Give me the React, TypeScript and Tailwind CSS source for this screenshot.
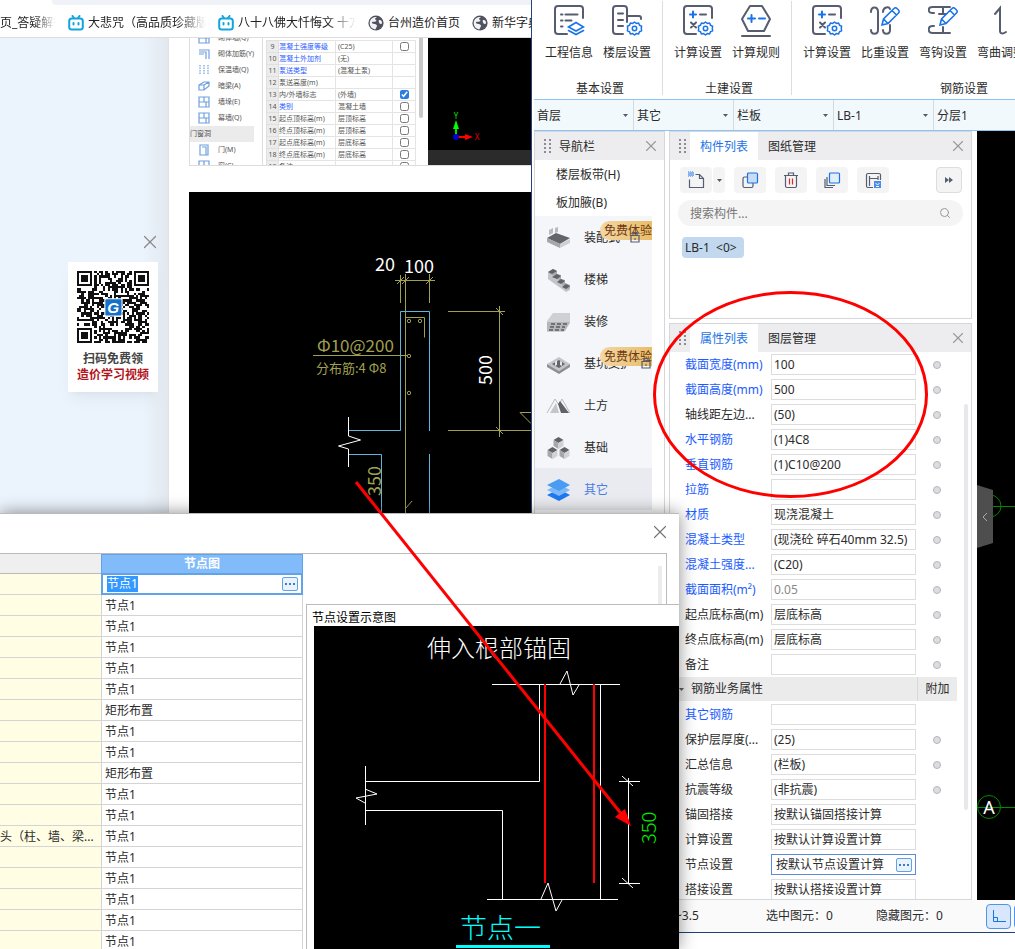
import type { ReactNode } from "react";
import clsx from "clsx";
import { Search, X } from "lucide-react";

const INK = "#575d70";
const BLUE = "#1a73e8";
const OLIVE = "#a0a050";
const CAD_BLUE = "#5fb4dc";

/* ---------- browser ---------- */

const bookmarks = [
  { title: "大悲咒（高品质珍藏版", icon: "tv", faded: true },
  { title: "八十八佛大忏悔文 十方", icon: "tv", faded: true },
  { title: "台州造价首页", icon: "globe", faded: false },
  { title: "新华字典", icon: "globe", faded: false },
];

const shotNav = [
  "砌体墙(Q)",
  "砌体加筋(Y)",
  "保温墙(Q)",
  "暗梁(A)",
  "墙垛(E)",
  "幕墙(Q)",
  "门窗洞",
  "门(M)",
  "窗(C)",
];

const shotRows = [
  { no: 9, name: "混凝土强度等级", value: "(C25)", blue: true, check: "off" },
  { no: 10, name: "混凝土外加剂", value: "(无)", blue: true, check: "" },
  { no: 11, name: "泵送类型", value: "(混凝土泵)", blue: true, check: "" },
  { no: 12, name: "泵送高度(m)", value: "", blue: false, check: "" },
  { no: 13, name: "内/外墙标志", value: "(外墙)", blue: false, check: "on" },
  { no: 14, name: "类别", value: "混凝土墙", blue: true, check: "off" },
  { no: 15, name: "起点顶标高(m)", value: "层顶标高", blue: false, check: "off" },
  { no: 16, name: "终点顶标高(m)", value: "层顶标高", blue: false, check: "off" },
  { no: 17, name: "起点底标高(m)", value: "层底标高", blue: false, check: "off" },
  { no: 18, name: "终点底标高(m)", value: "层底标高", blue: false, check: "off" },
  { no: 19, name: "备注", value: "", blue: false, check: "off" },
];

function TvIcon() {
  return (
    <svg viewBox="0 0 16 16" className="size-4 shrink-0" fill="none" stroke="#12a5dc" strokeWidth="2" strokeLinecap="round">
      <path d="M4.500 1 6 3M11.500 1 10 3" />
      <rect x="1.200" y="3.600" width="13.600" height="10.800" rx="2.500" />
      <path d="M5.500 8v1.600M10.500 8v1.600" />
    </svg>
  );
}

function GlobeIcon() {
  return (
    <svg viewBox="0 0 16 16" className="size-4 shrink-0">
      <circle cx="8" cy="8" r="7.600" fill="#50535f" />
      <path d="M9 2c-1 .8-2 1-2 2 0 .8 1.400.6 1.400 1.500S6.600 7 5 6.800C3.800 6.600 3.400 8 4.600 8.600c1 .5 2.400.2 3.400.9s1.400 1.600.6 2.600c-.6.8-.8 1.300-.9 2.200C4.200 14.200 1.700 11.400 1.700 8c0-3.600 3-6.400 7.300-6z" fill="#f2f3f5" />
      <path d="M11 5c1.200-.2 2.400.3 3 2l-.4 2c-1.400.4-3.600-1.400-2.600-4z" fill="#f2f3f5" />
    </svg>
  );
}

const QR = 33;

function inFinder(x: number, y: number) {
  const corners = [
    [0, 0],
    [QR - 7, 0],
    [0, QR - 7],
  ];
  for (const [cx, cy] of corners) {
    const dx = x - cx;
    const dy = y - cy;
    if (dx >= -1 && dx <= 7 && dy >= -1 && dy <= 7) {
      const ring = Math.max(Math.abs(dx - 3), Math.abs(dy - 3));
      return ring === 3 || ring <= 1 ? 1 : 0;
    }
  }
  return -1;
}

function QrCode() {
  let seed = 7341;
  let d = "";
  for (let y = 0; y < QR; y++) {
    for (let x = 0; x < QR; x++) {
      seed = (seed * 16807) % 2147483647;
      const finder = inFinder(x, y);
      const on = finder === -1 ? (seed >> 8) % 100 < 54 : finder === 1;
      if (on) d += `M${x} ${y}h1v1h-1z`;
    }
  }
  return (
    <svg viewBox={`0 0 ${QR} ${QR}`} className="size-[72px]">
      <path d={d} fill="#111" shapeRendering="crispEdges" />
      <rect x="12.500" y="12.500" width="8.400" height="8.400" rx="0.600" fill="#fff" />
      <rect x="13" y="13" width="7.400" height="7.400" rx="0.500" fill="#1570c8" />
      <text x="16.600" y="19.200" fontSize="7" fontWeight="900" fontStyle="italic" fill="#fff" textAnchor="middle" fontFamily="Liberation Sans">
        G
      </text>
    </svg>
  );
}

function ShotIcon({ kind }: { kind: number }) {
  return (
    <svg viewBox="0 0 12 12" className="size-3" fill="none" stroke="#6f9fe0" strokeWidth="1.200">
      {kind === 1 && <path d="M1 2h10v9M1 4h7v7M1 6h5" />}
      {kind === 2 && <path d="M2 1v10M6 1v10M10 1v10" strokeDasharray="1.500 1" />}
      {kind === 3 && <path d="M1 5l5-3h5v4l-5 4H1zM1 5h5l5-3M6 5v5" />}
      {kind === 7 && <path d="M2 1h8v10H2zM4 3h4v8" />}
      {kind !== 1 && kind !== 2 && kind !== 3 && kind !== 7 && <path d="M1 1h10v10H1zM1 6h10M6 1v5M8 6v5" />}
    </svg>
  );
}

function SoftwareShot() {
  return (
    <div className="flex h-[128px] shrink-0 overflow-hidden border-b border-[#ddd] text-[7px] text-[#555]">
      <ul className="-mt-2 w-[74px] shrink-0 border-x border-[#ddd]">
        {shotNav.map((name, i) => (
          <li key={name} className={clsx("flex h-4 items-center gap-2", name === "门窗洞" ? "mr-2 bg-[#ebebeb] pl-0" : "pl-2")}>
            {name !== "门窗洞" && <ShotIcon kind={i} />}
            {name}
          </li>
        ))}
      </ul>
      <div className="ml-[3px] w-[150px] shrink-0">
        <table className="mt-[2px] w-full table-fixed border-collapse">
          <tbody>
            {shotRows.map((row) => (
              <tr key={row.no} className="h-3 leading-[10px]">
                <td className="w-3 border border-[#e0e0e0] bg-[#ececec] text-center">{row.no}</td>
                <td className={clsx("w-[57px] border border-[#e4e4e4] whitespace-nowrap", row.blue && "text-[#2a5cff]")}>{row.name}</td>
                <td className="w-[57px] border border-[#e4e4e4] pl-0.5 whitespace-nowrap">{row.value}</td>
                <td className="border border-[#e4e4e4]">
                  {row.check && (
                    <input
                      type="checkbox"
                      aria-label={row.name}
                      defaultChecked={row.check === "on"}
                      className="mx-auto block size-[9px] accent-[#2a7de1]"
                    />
                  )}
                </td>
              </tr>
            ))}
          </tbody>
        </table>
      </div>
      <div className="w-3 shrink-0 px-[3px]">
        <div className="h-20 w-1 rounded-b bg-[#c8c8c8]" />
      </div>
      <svg viewBox="428 38 103 128" className="h-full min-w-0 flex-1 bg-black" preserveAspectRatio="xMinYMin slice">
        <rect x="428" y="150" width="103" height="16" fill="#2b2b2b" />
        <path d="M456 137V126" stroke="#00e000" strokeWidth="2" />
        <path d="M453 129l3-9 3 9z" fill="#00ff00" />
        <path d="M456 137h11" stroke="#f00" strokeWidth="2" />
        <path d="M465 134l8 3-8 3z" fill="#f00" />
        <circle cx="456" cy="137" r="3" fill="#0000d0" />
        <text x="456" y="119" fill="#00e000" fontSize="8" textAnchor="middle">Y</text>
        <text x="477" y="140" fill="#e00000" fontSize="8" textAnchor="middle">X</text>
      </svg>
    </div>
  );
}

function SectionDrawing() {
  return (
    <svg viewBox="189 192 342 400" className="mt-[26px] h-[400px] w-full shrink-0 bg-black" preserveAspectRatio="xMinYMin slice" fill="none" fontFamily="Liberation Sans Narrow, Noto Sans CJK SC, sans-serif">
      <g stroke={OLIVE}>
        <path d="M395 280.500h40M400.500 275v28M405.500 274v318M429.500 274v29" />
        <path d="M397 284l7-7M402 284l7-7M426 284l7-7" />
        <path d="M405 317.500h19.500v20M313 355.500h94M448 311.500h57M448 430.500h83M499.500 306v131" />
        <path d="M496 308l7 7M496 427l7 7M531 412.500h-11l11 11M406 508l6-7" />
        <circle cx="409" cy="321" r="1.700" />
        <circle cx="420" cy="321" r="1.700" />
        <circle cx="409" cy="356" r="1.700" />
        <circle cx="409" cy="393" r="1.700" />
      </g>
      <g stroke={CAD_BLUE}>
        <path d="M348 430.500h52.500v-119h29V431M348 454.500h33.500V592M429.500 454v138" />
      </g>
      <path d="M348.500 417v19l12 4-22 6 10 3v18" stroke="#fff" />
      <g fill="#fff" fontSize="18">
        <text x="375" y="271">20</text>
        <text x="404" y="273">100</text>
        <text transform="translate(492 385) rotate(-90)">500</text>
      </g>
      <g fill={OLIVE}>
        <text x="317" y="352" fontSize="17">Φ10@200</text>
        <text x="316" y="373" fontSize="13">分布筋:4 Φ8</text>
        <text transform="translate(381 496) rotate(-90)" fontSize="18">350</text>
      </g>
    </svg>
  );
}

function Browser() {
  return (
    <div className="flex w-[531px] shrink-0 flex-col overflow-hidden bg-white">
      <div className="ml-[52px] h-[5px] shrink-0 rounded-bl bg-[#eff3f7]" />
      <nav className="flex h-[33px] shrink-0 items-center gap-3 border-b border-[#ddd] pt-1 text-xs whitespace-nowrap text-[#222]">
        <a href="#faq" className="w-14 shrink-0 overflow-hidden [mask-image:linear-gradient(to_right,black_60%,transparent)]">
          页_答疑解答
        </a>
        {bookmarks.map((mark) => (
          <a key={mark.title} href="#bookmark" className="flex shrink-0 items-center gap-1">
            {mark.icon === "tv" ? <TvIcon /> : <GlobeIcon />}
            <span className={clsx(mark.faded && "w-[118px] overflow-hidden [mask-image:linear-gradient(to_right,black_75%,transparent)]")}>
              {mark.title}
            </span>
          </a>
        ))}
      </nav>
      <div className="flex min-h-0 flex-1">
        <aside className="flex w-[169px] shrink-0 flex-col items-end border-r border-[#dfe3e8] bg-linear-to-r from-[#ebf3fc] from-85% to-[#e2e8ef] pt-[193px] pr-[7px]">
          <button type="button" aria-label="关闭" className="text-[#888]">
            <X size={22} strokeWidth={1.3} />
          </button>
          <div className="mt-[9px] mr-[3px] flex h-[130px] w-[90px] flex-col items-center bg-white pt-[9px] text-xs font-bold shadow-lg shadow-black/5">
            <QrCode />
            <p className="mt-2 leading-4 text-[#444]">扫码免费领</p>
            <p className="leading-4 text-[#b3141c]">造价学习视频</p>
          </div>
        </aside>
        <main className="flex min-w-0 flex-1 flex-col pl-5">
          <SoftwareShot />
          <SectionDrawing />
        </main>
      </div>
    </div>
  );
}

/* ---------- ribbon ---------- */

function Gear() {
  return (
    <g stroke={BLUE} strokeWidth="1.500" fill="#fff">
      <path d="M22.500 17l1.800 1.400 2.300-.3.900 2.200 2.100.9-.3 2.300 .3 2.300-2.100.9-.9 2.200-2.300-.3-1.800 1.400-1.800-1.400-2.300.3-.9-2.200-2.100-.9.300-2.300-.3-2.300 2.100-.9.900-2.200 2.300.3z" strokeLinejoin="round" />
      <circle cx="22.500" cy="23.500" r="2.200" />
    </g>
  );
}

function CalcGlyph() {
  return (
    <>
      <path d="M29 13V4a3 3 0 0 0-3-3H4a3 3 0 0 0-3 3v22a3 3 0 0 0 3 3h9" />
      <path d="M17 9.500h6M8 17.500l5 5M13 17.500l-5 5" />
      <path d="M7 9.500h6M10 6.500v6" stroke={BLUE} />
      <Gear />
    </>
  );
}

function Pencil() {
  return (
    <path
      d="M12 20l1.500-6L24 3.500a2 2 0 0 1 3 0L28.500 5a2 2 0 0 1 0 3L18 18.500zM22 5.500l4.500 4.500M13.500 14l4.500 4.500"
      stroke={BLUE}
      fill="#fff"
      strokeWidth="1.600"
    />
  );
}

const ribbonIcons: Record<string, ReactNode> = {
  project: (
    <>
      <path d="M29 13V4a3 3 0 0 0-3-3H4a3 3 0 0 0-3 3v22a3 3 0 0 0 3 3h9" />
      <path d="M7 9.500h1.500M11.500 9.500h12M7 15.500h1.500M11.500 15.500h6M7 21.500h1.500" />
      <path d="M14.500 22l7.500-4.500 7.500 4.500-7.500 4zM14.500 25.500l7.500 4 7.500-4" stroke={BLUE} strokeWidth="1.600" />
    </>
  ),
  floor: (
    <>
      <path d="M11 29H4a3 3 0 0 1-3-3V4a3 3 0 0 1 3-3h8a3 3 0 0 1 3 3v13M15 11h12a2 2 0 0 1 2 2v1" />
      <path d="M6 8.500h5M6 15h5M6 21h5" />
      <Gear />
    </>
  ),
  calc: <CalcGlyph />,
  rule: (
    <>
      <path d="M9 1h12l8 13-6 12H7L1 14z" strokeLinejoin="round" />
      <path d="M1 31h28" />
      <path d="M7 13.500h7M10.500 10v7M18 13.500h6" stroke={BLUE} />
    </>
  ),
  weight: (
    <>
      <path d="M1 7c0-6 7-6 7 0v18c0 5-7 5-7 0M13 7c0-5 6-6 7-3M13 25c0 5 7 5 7 0v-5" />
      <Pencil />
    </>
  ),
  hook: (
    <>
      <path d="M22 2H4.500c-5 0-5 6 0 6H6M15 2v6M11 9h8M22 28H4.500c-5 0-5-7 0-7H6M15 22v6" />
      <Pencil />
    </>
  ),
  bend: <path d="M9 9l5-6v23c0 3 3 3 6 1" />,
};

const ribbonGroups = [
  {
    title: "基本设置",
    items: [
      { label: "工程信息", icon: "project" },
      { label: "楼层设置", icon: "floor" },
    ],
  },
  {
    title: "土建设置",
    items: [
      { label: "计算设置", icon: "calc" },
      { label: "计算规则", icon: "rule" },
    ],
  },
  {
    title: "钢筋设置",
    items: [
      { label: "计算设置", icon: "calc" },
      { label: "比重设置", icon: "weight" },
      { label: "弯钩设置", icon: "hook" },
      { label: "弯曲调整", icon: "bend" },
    ],
  },
];

function Ribbon() {
  return (
    <div className="flex h-[99px] shrink-0 overflow-hidden pt-px">
      {ribbonGroups.map((group, i) => (
        <section key={group.title} className={clsx("h-[94px] shrink-0 px-[6px] pt-1", i < 2 ? "w-[129px] border-r border-[#ddd]" : "w-[340px]")}>
          <div className="flex">
            {group.items.map((item) => (
              <button key={item.label} type="button" className="flex w-[58px] shrink-0 flex-col items-center whitespace-nowrap">
                <svg viewBox="0 0 31 32" className="h-8 w-[31px]" fill="none" stroke={INK} strokeWidth="2" strokeLinecap="round">
                  {ribbonIcons[item.icon]}
                </svg>
                <span className="mt-2 leading-4">{item.label}</span>
              </button>
            ))}
          </div>
          <p className="mt-5 pl-1 text-center leading-4">{group.title}</p>
        </section>
      ))}
    </div>
  );
}

const pickers = [
  { label: "楼层", value: "首层" },
  { label: "类别", value: "其它" },
  { label: "构件类型", value: "栏板" },
  { label: "构件", value: "LB-1" },
  { label: "分层", value: "分层1" },
];

function PickerBar() {
  return (
    <div className="flex h-8 shrink-0 overflow-hidden border-y border-[#90c3f5] bg-[#f2f9fd]">
      {pickers.map((picker) => (
        <label key={picker.label} className="relative flex w-[100px] shrink-0 items-center border-r border-[#d5dade]">
          <select aria-label={picker.label} className="w-full appearance-none bg-transparent pt-0.5 pl-[3px] outline-none">
            <option>{picker.value}</option>
          </select>
          <Caret className="pointer-events-none absolute right-[5px]" />
        </label>
      ))}
    </div>
  );
}

function Caret({ className }: { className?: string }) {
  return (
    <svg viewBox="0 0 5 3" className={clsx("h-[3px] w-[5px]", className)}>
      <path d="M0 0h5L2.500 3z" fill="#555a66" />
    </svg>
  );
}

/* ---------- panels ---------- */

function Grip() {
  return (
    <svg viewBox="0 0 7 14" className="h-[14px] w-[7px]" fill="#8a8c92">
      {[0, 4, 8, 12].map((y) => (
        <g key={y}>
          <rect y={y} width="2" height="2" />
          <rect x="5" y={y} width="2" height="2" />
        </g>
      ))}
    </svg>
  );
}

function CloseButton() {
  return (
    <button type="button" aria-label="关闭" className="ml-auto text-[#999]">
      <X size={18} strokeWidth={1.5} />
    </button>
  );
}

function TabHeader({ active, other }: { active: string; other: string }) {
  return (
    <header className="flex h-7 shrink-0 items-center bg-[#ededf0] pr-1 pl-[9px]">
      <Grip />
      <button type="button" className="ml-1 h-full w-[68px] bg-white pt-0.5 text-[#1a73e8]">
        {active}
      </button>
      <button type="button" className="h-full w-[68px] pt-0.5">
        {other}
      </button>
      <CloseButton />
    </header>
  );
}

const navIcons: Record<string, ReactNode> = {
  装配式: (
    <>
      <path d="M1 12l9-5 14 5-10 6z" fill="#62656b" />
      <path d="M1 12l13 6v4L1 16z" fill="#a5a7ab" />
      <path d="M14 18l10-5v4l-10 5z" fill="#cfd0d3" />
      <path d="M3 4l4-2v5l-4 2zM9 2l3-1v5l-3 1z" fill="#b9bbbf" />
    </>
  ),
  楼梯: (
    <>
      <path d="M2 4v7l18 13 4-2v-4z" fill="#c2c4c7" />
      <path d="M2 4l5-3 4 2v3l4 1v4l4 1v3l5 2v3l-4 2v-3l-4-2v-4l-5-2V9L6 7z" fill="#a8aaae" />
      <path d="M2 4l5-3 4 2-5 3zM6 9l5-3 4 2-4 3zM11 14l4-3 4 2-4 3zM16 19l4-3 4 2-4 3z" fill="#5f6268" />
    </>
  ),
  装修: (
    <>
      <path d="M1 11l6-8h17v10l-6 9H1z" fill="#cfd0d3" />
      <path d="M1 12h23l-5 9H1z" fill="#b4b6ba" />
      <path d="M5 14h4M11 14h4M17 14h4M4 17h4M10 17h4M16 17h3M3 20h4M9 20h4M15 20h3" stroke="#5a5d63" strokeWidth="1.600" />
    </>
  ),
  基坑支护: (
    <>
      <path d="M1 12l12-7 11 7-11 7z" fill="#c4c5c8" />
      <path d="M1 12v3l12 7v-3zM24 12v3l-11 7v-3z" fill="#8c8f94" />
      <path d="M6 12l7-4 6 4-6 4z" fill="#62656b" />
      <path d="M9 10l2-2v5l-2 1zM14 9l2 1v4l-2-1z" fill="#e6e6e8" />
    </>
  ),
  土方: (
    <>
      <path d="M1 19L9 5l4 6 3-6 8 14" stroke="#b9bbbf" fill="none" />
      <path d="M4 19l6-10 3 10z" fill="#c4c5c8" />
      <path d="M12 10l2-3 9 12h-8z" fill="#5f6268" />
    </>
  ),
  基础: (
    <>
      {[
        [12.5, 1],
        [6.5, 11],
        [18.5, 11],
      ].map(([x, y]) => (
        <g key={x} transform={`translate(${x} ${y})`}>
          <path d="M-5 3L0 0l5 3-5 3z" fill="#5f6268" />
          <path d="M-5 3l5 3v6l-5-3z" fill="#a5a7ab" />
          <path d="M5 3L0 6v6l5-3z" fill="#d0d1d4" />
        </g>
      ))}
    </>
  ),
  其它: (
    <>
      <path d="M1 17l12-6 11 6-11 6z" fill="#1e78f0" />
      <path d="M1 12l12-6 11 6-11 6z" fill="#7fb8f8" />
      <path d="M1 7l12-6 11 6-11 6z" fill="#4c9bf3" />
    </>
  ),
};

const navItems = ["装配式", "楼梯", "装修", "基坑支护", "土方", "基础", "其它"];

function NavPanel() {
  return (
    <section className="flex w-[131px] shrink-0 flex-col border border-[#d6d7da] bg-white">
      <header className="flex h-7 shrink-0 items-center bg-[#ededf0] pr-1 pl-[9px]">
        <Grip />
        <h2 className="ml-2 pt-0.5">导航栏</h2>
        <CloseButton />
      </header>
      <a href="#slab-strip" className="h-7 pt-0.5 pl-[21px] leading-[26px]">楼层板带(H)</a>
      <a href="#slab-haunch" className="h-7 pt-0.5 pl-[21px] leading-[26px]">板加腋(B)</a>
      <ul className="mr-3 bg-[#f5f6f9]">
        {navItems.map((name) => {
          const trial = name === "装配式" || name === "基坑支护";
          return (
            <li key={name} className={clsx("relative flex h-[42px] items-center pt-0.5 pl-[11px]", name === "其它" && "bg-[#e9ebf0] text-[#4a7de0]")}>
              <svg viewBox="0 0 25 25" className="size-[25px]">
                {navIcons[name]}
              </svg>
              <a href="#category" className="ml-[13px] whitespace-nowrap">{name}</a>
              {trial && (
                <>
                  <span className="absolute top-[5px] right-0 h-[19px] w-[52px] rounded-l-full bg-linear-to-r from-[#f3d6a3] to-[#e9bd68] pl-1 leading-[20px] whitespace-nowrap text-[#6e3a12]">
                    免费体验
                  </span>
                  <svg viewBox="0 0 10 12" className={clsx("absolute top-[15px] h-3 w-[10px]", name === "装配式" ? "right-3" : "right-px")} fill="none" stroke="#555c70" strokeWidth="1.200">
                    <path d="M1 4.500h8v6.500H1zM3 4V1.500h4V4M5 7v2" />
                  </svg>
                </>
              )}
            </li>
          );
        })}
      </ul>
    </section>
  );
}

const toolIcons: Record<string, ReactNode> = {
  new: (
    <>
      <path d="M7.500 3.500h4l4 4v9h-14v-8" />
      <path d="M11.500 3.500v4h4" />
      <path d="M0 1h6M0 3h6M0 5h6" stroke={BLUE} strokeWidth="1" strokeDasharray="1 1" />
      <path d="M1 2h5M1 4h5" stroke={BLUE} strokeWidth="1" strokeDasharray="1 1" />
    </>
  ),
  copy: (
    <>
      <rect x="1" y="6" width="10" height="10.500" rx="1.500" />
      <rect x="5.500" y="2" width="10" height="10" rx="1" fill="#c9dcf7" stroke={BLUE} />
    </>
  ),
  remove: (
    <>
      <path d="M2.500 5v10a1.500 1.500 0 0 0 1.500 1.500h8a1.500 1.500 0 0 0 1.500-1.500V5M1 4.500h14M5.500 4V2h5v2" />
      <path d="M6.500 7.500v6M9.500 7.500v6" stroke="#d92b2b" />
    </>
  ),
  layers: (
    <>
      <path d="M1 8v8.500h8M3 6v8.500h8" />
      <rect x="5.500" y="2" width="10" height="10" rx="1" fill="#e3eefb" stroke={BLUE} />
    </>
  ),
  store: (
    <>
      <path d="M8 16.500H3A1.500 1.500 0 0 1 1.500 15V4A1.500 1.500 0 0 1 3 2.500h11A1.500 1.500 0 0 1 15.500 4v5M4.500 5v10M4.500 7.500h8.500M13 5v4" />
      <rect x="9" y="10" width="7" height="7" fill="#4a8de8" stroke="none" />
      <path d="M10.500 12l2 2 2-2M11 15.500h3" stroke="#fff" strokeWidth="1" />
    </>
  ),
};

function ToolIcon({ name }: { name: string }) {
  return (
    <svg viewBox="0 0 17 18" className="h-[18px] w-[17px]" fill="none" stroke={INK} strokeWidth="1.200">
      {toolIcons[name]}
    </svg>
  );
}

const toolClass = "flex h-[26px] items-center justify-center rounded-sm bg-[#f4f4f4]";

function ComponentPanel() {
  return (
    <section className="flex h-[188px] shrink-0 flex-col border border-[#d6d7da] bg-white">
      <TabHeader active="构件列表" other="图纸管理" />
      <div className="mt-[7px] flex pr-[9px] pl-[10px]">
        <button type="button" aria-label="新建" className={clsx(toolClass, "w-8")}>
          <ToolIcon name="new" />
        </button>
        <button type="button" aria-label="新建选项" className={clsx(toolClass, "ml-px w-3")}>
          <Caret />
        </button>
        <div className="ml-[9px] flex gap-[9px]">
          {[
            { icon: "copy", label: "复制" },
            { icon: "remove", label: "删除" },
            { icon: "layers", label: "层间复制" },
            { icon: "store", label: "存档" },
          ].map((tool) => (
            <button key={tool.icon} type="button" aria-label={tool.label} className={clsx(toolClass, "w-8")}>
              <ToolIcon name={tool.icon} />
            </button>
          ))}
        </div>
        <button type="button" aria-label="更多" className={clsx(toolClass, "ml-auto w-[26px] border border-[#ddd]")}>
          <svg viewBox="0 0 8 6" className="h-[6px] w-2" fill={INK}>
            <path d="M0 0l4 3-4 3zM4 0l4 3-4 3z" />
          </svg>
        </button>
      </div>
      <div className="mx-2 mt-[7px] flex h-[26px] items-center rounded-full bg-[#f4f4f4] pr-3 pl-3">
        <input aria-label="搜索构件" placeholder="搜索构件..." className="min-w-0 flex-1 bg-transparent pt-0.5 outline-none placeholder:text-[#777]" />
        <Search size={12} className="text-[#999]" />
      </div>
      <button type="button" className="mt-[11px] ml-3 h-[21px] w-[62px] self-start rounded-sm bg-[#c1d8ef] px-[3px] text-left">
        LB-1&nbsp; &lt;0&gt;
      </button>
    </section>
  );
}

type Prop = { name: string; value: string; blue?: boolean; dot?: boolean; dim?: boolean };

const baseProps: Prop[] = [
  { name: "截面宽度(mm)", value: "100", blue: true, dot: true },
  { name: "截面高度(mm)", value: "500", blue: true, dot: true },
  { name: "轴线距左边...", value: "(50)", dot: true },
  { name: "水平钢筋", value: "(1)4C8", blue: true, dot: true },
  { name: "垂直钢筋", value: "(1)C10@200", blue: true, dot: true },
  { name: "拉筋", value: "", blue: true, dot: true },
  { name: "材质", value: "现浇混凝土", blue: true, dot: true },
  { name: "混凝土类型", value: "(现浇砼 碎石40mm 32.5)", blue: true, dot: true },
  { name: "混凝土强度...", value: "(C20)", blue: true, dot: true },
  { name: "截面面积(m²)", value: "0.05", blue: true, dot: true, dim: true },
  { name: "起点底标高(m)", value: "层底标高", dot: true },
  { name: "终点底标高(m)", value: "层底标高", dot: true },
  { name: "备注", value: "", dot: true },
];

const rebarProps: Prop[] = [
  { name: "其它钢筋", value: "", blue: true },
  { name: "保护层厚度(...", value: "(25)", dot: true },
  { name: "汇总信息", value: "(栏板)", dot: true },
  { name: "抗震等级", value: "(非抗震)", dot: true },
  { name: "锚固搭接", value: "按默认锚固搭接计算" },
  { name: "计算设置", value: "按默认计算设置计算" },
  { name: "节点设置", value: "按默认节点设置计算" },
  { name: "搭接设置", value: "按默认搭接设置计算" },
];

function MoreButton() {
  return (
    <button type="button" aria-label="浏览" className="mr-[3px] flex h-[14px] w-4 shrink-0 items-center justify-center gap-0.5 rounded-xs border border-[#62a2e8] bg-[#eaf2fc]">
      <i className="size-0.5 bg-[#3a7bd5]" />
      <i className="size-0.5 bg-[#3a7bd5]" />
      <i className="size-0.5 bg-[#3a7bd5]" />
    </button>
  );
}

function PropRow({ prop }: { prop: Prop }) {
  const focused = prop.name === "节点设置";
  return (
    <div className="flex h-[25px] shrink-0 items-center pl-[15px]">
      <label htmlFor={prop.name} className={clsx("w-[86px] shrink-0 whitespace-nowrap", prop.blue && "text-[#1a5cff]")}>
        {prop.name}
      </label>
      <div className={clsx("flex h-[21px] min-w-0 flex-1 items-center border", focused ? "border-[#5b8bd8] pl-1" : "border-[#ddd] pl-0.5")}>
        <input
          id={prop.name}
          defaultValue={prop.value}
          className={clsx("min-w-0 flex-1 bg-transparent outline-none", prop.dim && "text-[#888]")}
        />
        {focused && <MoreButton />}
      </div>
      <div className="w-[55px] shrink-0 pl-[17px]">
        {prop.dot && <div className="size-2 rounded-full border border-[#b4b6ba] bg-[#dcdde0]" />}
      </div>
    </div>
  );
}

function PropertyPanel() {
  return (
    <section className="relative flex min-h-0 flex-1 flex-col overflow-hidden border border-[#d6d7da] bg-white">
      <TabHeader active="属性列表" other="图层管理" />
      {baseProps.map((prop) => (
        <PropRow key={prop.name} prop={prop} />
      ))}
      <div className="mr-[14px] mb-px flex h-6 shrink-0 items-center bg-[#ebebeb] pl-[9px]">
        <Caret />
        <h3 className="ml-[7px] flex-1">钢筋业务属性</h3>
        <span className="h-full w-10 border-l border-[#d8d8d8] text-center leading-6">附加</span>
      </div>
      {rebarProps.map((prop) => (
        <PropRow key={prop.name} prop={prop} />
      ))}
      <div className="absolute top-20 right-[3px] h-[406px] w-1 rounded-full bg-[#e8e8ea]" />
    </section>
  );
}

function Canvas() {
  return (
    <svg viewBox="977 131 38 769" className="ml-[5px] h-full min-w-0 flex-1 bg-black" preserveAspectRatio="xMinYMin slice" fill="none">
      <g stroke="#008a00">
        <circle cx="990" cy="506" r="11" />
        <path d="M993 506.500h200M1000 807.500h200M977 807.500h24" />
        <circle cx="989" cy="807" r="11.500" />
      </g>
      <path d="M977 485l16 5v53l-16 5z" fill="#4e4e4e" />
      <path d="M987 513l-4 4 4 4" stroke="#aaa" />
      <text x="989" y="814" fill="#fff" fontSize="18" textAnchor="middle">A</text>
    </svg>
  );
}

function ModelingApp() {
  return (
    <div className="flex min-w-0 flex-1 flex-col overflow-hidden border-l border-[#24457c] bg-white pb-4">
      <div className="flex min-h-0 flex-1 flex-col pl-[2px]">
        <Ribbon />
        <PickerBar />
        <div className="flex min-h-0 flex-1">
          <NavPanel />
          <div className="ml-1 flex w-[303px] shrink-0 flex-col gap-1">
            <ComponentPanel />
            <PropertyPanel />
          </div>
          <Canvas />
        </div>
      </div>
      <footer className="flex h-[33px] shrink-0 items-center overflow-hidden border-b border-[#1f4079] bg-[#fafafa] pl-[143px] whitespace-nowrap">
        <span className="w-[91px] shrink-0">~3.5</span>
        <span className="w-[110px] shrink-0">选中图元：0</span>
        <span className="w-[110px] shrink-0">隐藏图元：0</span>
        <button type="button" aria-label="正交" className="flex size-[25px] shrink-0 items-center justify-center rounded-sm border border-[#4d94ea] bg-[#d8e7fb]">
          <svg viewBox="0 0 14 12" className="h-3 w-[14px]" fill="none" stroke={BLUE}>
            <path d="M1.500 0v11.500H14M1.500 7.500h4v4" />
          </svg>
        </button>
        <button type="button" aria-label="捕捉" className="ml-[3px] size-[25px] shrink-0 rounded-sm border border-[#4d94ea] bg-[#d8e7fb]" />
      </footer>
    </div>
  );
}

/* ---------- node dialog ---------- */

const nodeRows = Array.from({ length: 18 }, (_, i) => ({
  id: i,
  name: i === 12 ? "头（柱、墙、梁..." : "",
  node: i === 6 || i === 9 ? "矩形布置" : "节点1",
}));

function NodeTable() {
  return (
    <table className="w-[303px] shrink-0 table-fixed border-separate border-spacing-0 self-start">
      <thead>
        <tr className="h-5">
          <th className="w-[101px] border-b border-[#bbb] bg-[#efefef]" />
          <th className="border border-[#62a2e8] bg-[#82bbfa] p-0 font-bold text-white">节点图</th>
        </tr>
      </thead>
      <tbody>
        {nodeRows.map((row) => (
          <tr key={row.id} className="h-[21px] leading-4">
            <td className="border-b border-[#d4d4d4] bg-[#fffde4] p-0 pt-0.5 pr-2 text-right whitespace-nowrap">{row.name}</td>
            {row.id === 0 ? (
              <td className="border-2 border-t border-[#62a2e8] p-0">
                <div className="flex items-center justify-between pl-1">
                  <span className="bg-[#3399ff] text-white">{row.node}</span>
                  <MoreButton />
                </div>
              </td>
            ) : (
              <td className="border-x border-b border-[#d4d4d4] p-0 pt-0.5 pl-[3px]">{row.node}</td>
            )}
          </tr>
        ))}
      </tbody>
    </table>
  );
}

function NodeDrawing() {
  return (
    <svg viewBox="314 626 365 323" className="ml-[7px] min-h-0 flex-1 bg-black" preserveAspectRatio="xMinYMin slice" fill="none" fontFamily="Noto Sans CJK SC, sans-serif">
      <g stroke="#fff">
        <path d="M492 684.500h128M560 684l7-13 6 24 6-10" />
        <path d="M539.500 684v97.500H365M365.500 766v59M365 810.500h137.500V899M600.500 684v215M487 899.500h131" />
        <path d="M365 789l12 5-21 4 9 5M541 899l7-16 8 28 6-11" />
        <path d="M628.500 778v106M619 781.500h21M619 883.500h21M622 776l11 10M622 878l11 10" />
      </g>
      <path d="M545 684v199M594 684v199" stroke="#f00" strokeWidth="2" />
      <text x="427" y="657" fontSize="24" fontWeight="300" fill="#fff">伸入根部锚固</text>
      <text transform="translate(656 844) rotate(-90)" fontSize="20" fontWeight="300" fill="#00f000">350</text>
      <text x="460" y="938" fontSize="27" fontWeight="300" fill="#0ff">节点一</text>
      <path d="M456 946.500h94" stroke="#0ff" strokeWidth="3" />
    </svg>
  );
}

function NodeDialog() {
  return (
    <div role="dialog" aria-label="节点设置" className="absolute top-[513px] bottom-0 left-0 flex w-[679px] flex-col overflow-hidden border-t border-[#bbb] bg-white">
      <header className="flex h-[39px] shrink-0 justify-end pt-[7px] pr-2">
        <button type="button" aria-label="关闭" className="h-[22px] text-[#777]">
          <X size={22} strokeWidth={1.3} />
        </button>
      </header>
      <div className="flex min-h-0 flex-1">
        <div className="border-t border-[#bbb]">
          <NodeTable />
        </div>
        <div className="flex min-w-0 flex-1 flex-col">
          <div className="mr-3 flex h-[51px] shrink-0 justify-end border-t border-r border-[#bbb] pt-3 pr-1">
            <div className="w-1 bg-[#ececec]" />
          </div>
          <section className="ml-[3px] flex min-h-0 flex-1 flex-col border-t border-l border-[#bbb]">
            <h2 className="h-[21px] shrink-0 pt-0.5 pl-[5px] leading-[22px] text-black">节点设置示意图</h2>
            <NodeDrawing />
          </section>
        </div>
      </div>
    </div>
  );
}

function Markup() {
  return (
    <svg className="pointer-events-none absolute inset-0 size-full" fill="none" stroke="#f00" strokeWidth="3">
      <ellipse cx="790.500" cy="394.500" rx="136" ry="102" />
      <path d="M356 482L623 816" />
      <path d="M631 826l-16-9 10-8z" fill="#f00" stroke="none" />
    </svg>
  );
}

export default function App() {
  return (
    <div className="relative flex h-screen overflow-hidden bg-white font-['Noto_Sans','Noto_Sans_CJK_SC',sans-serif] text-xs text-[#2b2b2b]">
      <Browser />
      <ModelingApp />
      <div className="absolute top-[513px] bottom-0 left-0 w-[679px] shadow-[0_0_16px_rgba(0,0,0,0.45)]" />
      <NodeDialog />
      <Markup />
    </div>
  );
}
